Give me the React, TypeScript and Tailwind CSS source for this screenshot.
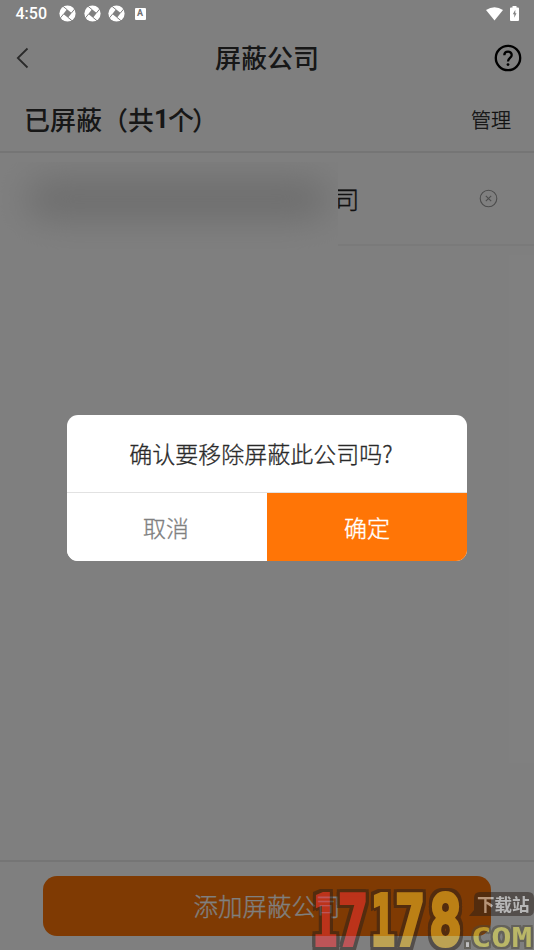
import type { ReactNode } from 'react';

const PIXEL_FONT = '"DejaVu Sans Mono", "Liberation Mono", monospace';

function SwirlIcon() {
  return (
    <svg width="17" height="17" viewBox="0 0 17 17">
      <circle cx="8.500" cy="8.500" r="8.100" fill="#fff" />
      <path d="M8 4.300 12.700 8 9 12.700 4.300 9Z" fill="#808080" />
      <path d="M8 4.600 4.200 1.500M12.400 8 15.500 4.200M9 12.400l3.800 3.100M4.600 9 1.500 12.800" stroke="#808080" strokeWidth="1" fill="none" />
    </svg>
  );
}

function StatusBar() {
  return (
    <div className="relative z-20 flex h-7 items-center pb-px pl-[15.5px] pr-[15px] text-white">
      <span className="w-[43.5px] font-[Roboto] text-[16px] font-medium leading-none">4:50</span>
      <div className="flex gap-[7.5px]">
        <SwirlIcon />
        <SwirlIcon />
        <SwirlIcon />
      </div>
      <span className="ml-[9.5px] flex h-[12px] w-[11px] items-center justify-center rounded-[1px] bg-white font-[Roboto] text-[9px] font-bold leading-none text-[#707070]">A</span>
      <svg className="ml-auto" width="17" height="14" viewBox="0 0 17 14">
        <path d="M0 3Q8.500-2.600 17 3L8.500 13.500Z" fill="#fff" />
      </svg>
      <svg className="ml-[7px]" width="9" height="15" viewBox="0 0 9 15">
        <path d="M2.500 0h4v1.500H8q1 0 1 1V14q0 1-1 1H1q-1 0-1-1V2.500q0-1 1-1h1.500Z" fill="#fff" />
        <path d="M5.300 3.800 2.800 8.300h1.500v3.400L6.500 7.200H5.300Z" fill="#808080" />
      </svg>
    </div>
  );
}

function Header() {
  return (
    <header className="flex h-[60px] items-center justify-between px-3">
      <svg className="ml-[4px]" width="13" height="22" viewBox="0 0 13 22" fill="none" stroke="#555" strokeWidth="1.8">
        <path d="M11.500 1.500 1.800 11l9.700 9.500" />
      </svg>
      <h1 className="ml-[11px] pb-[2px] text-[26px] font-medium leading-none text-[#2e2e2e]">屏蔽公司</h1>
      <svg className="relative z-20" width="28" height="28" viewBox="0 0 28 28" fill="none" stroke="#000" strokeWidth="2.300">
        <circle cx="14" cy="14" r="12.200" />
        <path d="M10.300 11.200c0-4.600 7.400-4.700 7.400-.2 0 2.900-3.700 3-3.700 6.500" />
        <circle cx="14" cy="20.600" r="1.400" fill="#000" stroke="none" />
      </svg>
    </header>
  );
}

function CompanyRow() {
  return (
    <div className="relative flex h-[93px] items-center border-b-2 border-[#f4f4f4] pl-[334px] pr-[36px]">
      <span className="pb-[2px] text-[25.5px] font-light leading-none text-[#222] [-webkit-text-stroke:0.35px]">司</span>
      {/* masked part of the company name */}
      <div className="absolute left-0 top-[9px] h-[90px] w-[338px] overflow-hidden bg-white">
        <div className="ml-[26px] mt-[18px] h-[38px] w-[304px] rounded-full bg-[#d8d8d8] blur-[18px]" />
      </div>
      <svg className="ml-auto" width="19" height="19" viewBox="0 0 19 19" fill="none" stroke="#999" strokeWidth="1.100">
        <circle cx="9.500" cy="9.500" r="8.300" />
        <path d="m6.800 6.800 5.400 5.400m0-5.400-5.400 5.400" />
      </svg>
    </div>
  );
}

function DialogButton({ children, primary }: { children: ReactNode; primary?: boolean }) {
  return (
    <button className={primary
      ? 'w-1/2 bg-[#ff7506] text-[23px] font-light text-white [-webkit-text-stroke:0.35px]'
      : 'w-1/2 bg-white pr-[2px] text-[23px] font-light text-[#808080] [-webkit-text-stroke:0.3px]'}
    >
      {children}
    </button>
  );
}

function ConfirmDialog() {
  return (
    <div className="absolute inset-0 z-10 bg-black/50">
      <div className="mx-auto mt-[415px] flex h-[146px] w-[400px] flex-col overflow-hidden rounded-[11px] bg-white">
        <p className="flex h-[78px] items-center justify-center border-b border-[#e2e2e2] pr-[12px] text-[23px] font-light text-[#2a2a2a] [-webkit-text-stroke:0.3px]">确认要移除屏蔽此公司吗?</p>
        <div className="flex flex-1">
          <DialogButton>取消</DialogButton>
          <DialogButton primary>确定</DialogButton>
        </div>
      </div>
    </div>
  );
}

function Watermark() {
  return (
    <svg
      className="absolute bottom-0 right-0 z-30 opacity-50"
      width="234"
      height="64"
      viewBox="300 886 234 64"
      fontFamily={PIXEL_FONT}
      fontWeight="700"
      strokeLinejoin="miter"
    >
      <g
        className="[filter:drop-shadow(3px_0_0_#291f19)_drop-shadow(-3px_0_0_#291f19)_drop-shadow(0_3px_0_#291f19)_drop-shadow(0_-3px_0_#291f19)]"
        fontSize="69"
        strokeWidth="4"
      >
        <g fill="#fa2d32" stroke="#fa2d32">
          <text x="313" y="945" textLength="24" lengthAdjust="spacingAndGlyphs">1</text>
          <text x="338" y="945" textLength="30" lengthAdjust="spacingAndGlyphs">7</text>
        </g>
        <g fill="#fac628" stroke="#fac628">
          <text x="371" y="945" textLength="24" lengthAdjust="spacingAndGlyphs">1</text>
          <text x="395" y="945" textLength="30" lengthAdjust="spacingAndGlyphs">7</text>
          <text x="429" y="945" textLength="33" lengthAdjust="spacingAndGlyphs">8</text>
        </g>
      </g>
      <path d="M480 892h48q6 0 6 6v12q0 6-6 6H469l5-6v-12q0-6 6-6Z" fill="#291f19" />
      <text x="477" y="911" fontSize="17.500" fill="#eee" fontFamily='"Noto Sans CJK SC", sans-serif'>下载站</text>
      <g
        className="[filter:drop-shadow(2px_0_0_#4a4638)_drop-shadow(-2px_0_0_#4a4638)_drop-shadow(0_2px_0_#4a4638)_drop-shadow(0_-2px_0_#4a4638)]"
        fontSize="27"
      >
        <text x="462" y="947" fill="#fff" textLength="11" lengthAdjust="spacingAndGlyphs">.</text>
        <text x="471" y="947" fill="#f5ef50" textLength="61" lengthAdjust="spacingAndGlyphs">COM</text>
      </g>
    </svg>
  );
}

export default function App() {
  return (
    <div lang="zh-CN" className="relative flex h-[950px] w-[534px] flex-col overflow-hidden bg-white font-['Noto_Sans_CJK_SC',sans-serif]">
      <StatusBar />
      <Header />
      <div className="flex h-[65px] items-center justify-between border-b-2 border-[#eaeaea] pl-[24px] pr-[23px]">
        <h2 className="flex items-center pb-[2px] text-[26px] font-medium leading-none text-[#2e2e2e]">
          已屏蔽（共<span className="-mr-px font-[Roboto] font-bold">1</span>个<span className="-ml-[2px]">）</span>
        </h2>
        <span className="text-[20px] font-light leading-none text-[#222] [-webkit-text-stroke:0.3px]">管理</span>
      </div>
      <CompanyRow />
      <footer className="mt-auto h-[90px] border-t-2 border-[#eaeaea] px-[43px] pt-[14px]">
        <button className="h-[60px] w-full rounded-[14px] bg-[#ff7506] text-[24.5px] font-light text-white [-webkit-text-stroke:0.25px]">添加屏蔽公司</button>
      </footer>
      <ConfirmDialog />
      <Watermark />
    </div>
  );
}
